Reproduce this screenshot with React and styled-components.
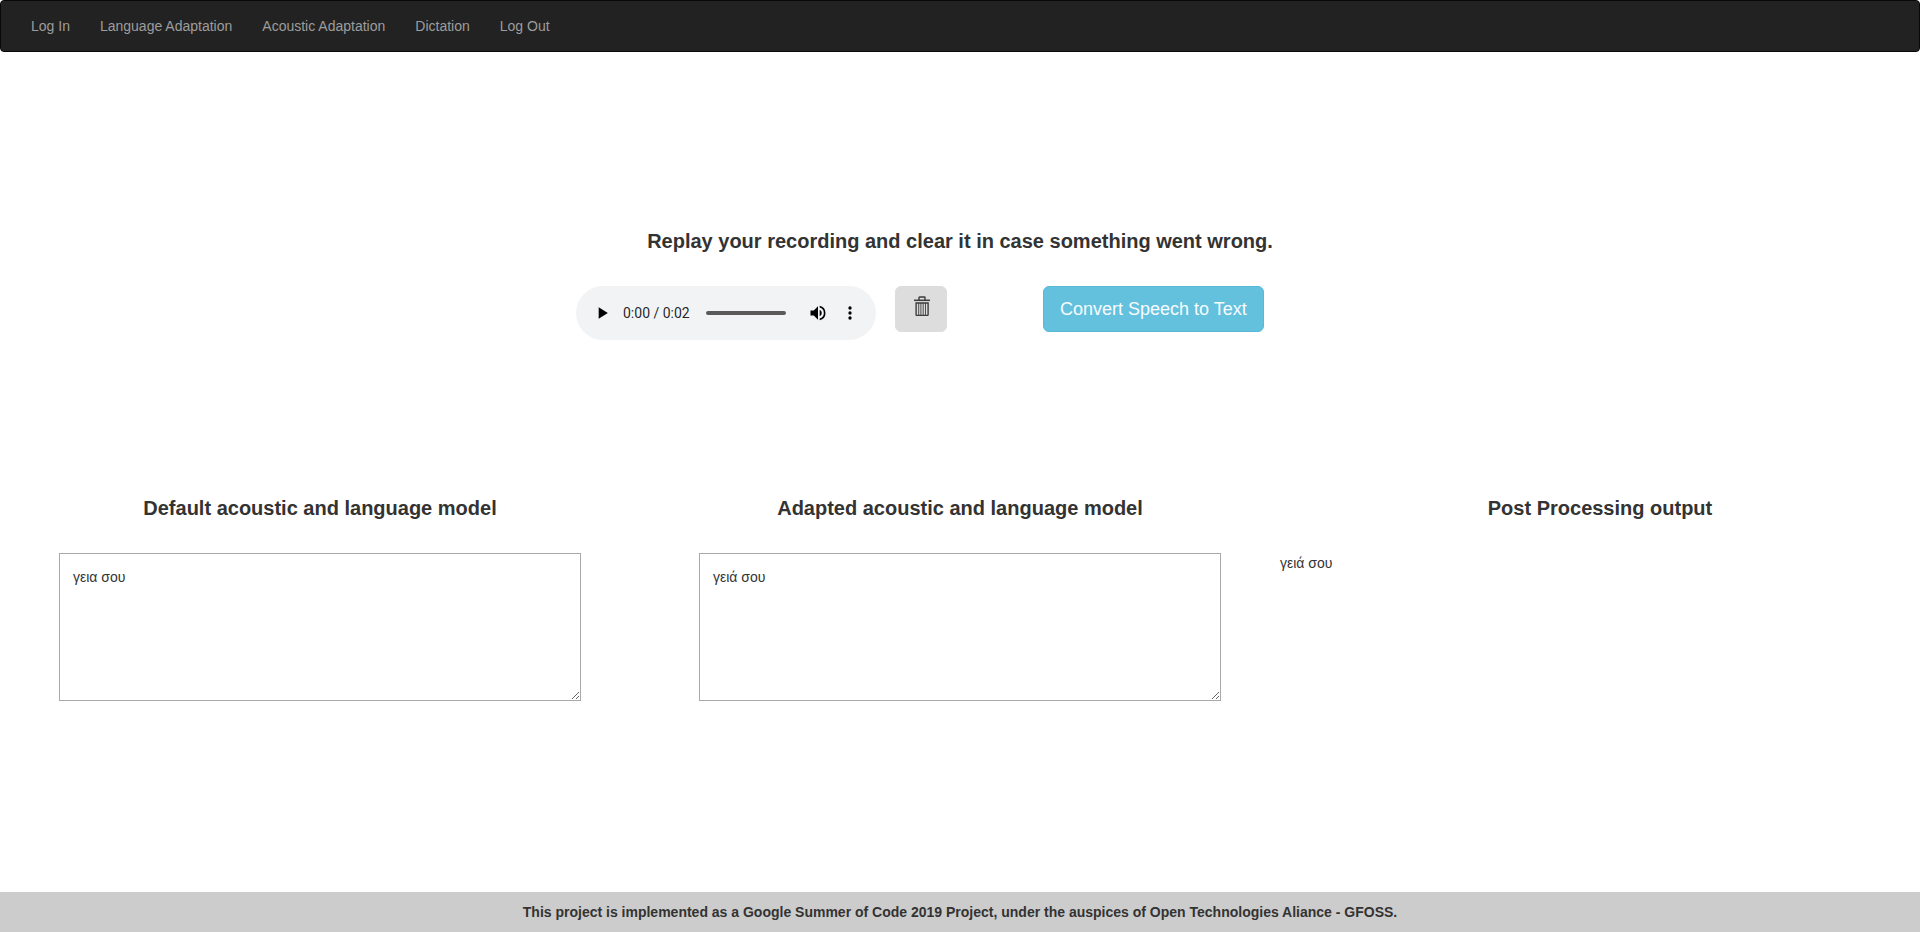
import React from "react";
import styled, { createGlobalStyle } from "styled-components";

const GlobalStyle = createGlobalStyle`
  *, *::before, *::after { box-sizing: border-box; }
  body {
    margin: 0;
    background: #fff;
    color: #333;
    font: 14px/20px "Liberation Sans", Arial, sans-serif;
  }
`;

const Page = styled.div`
  display: flex;
  flex-direction: column;
  min-height: 100vh;
`;

const Navbar = styled.nav`
  min-height: 52px;
  padding: 0 15px;
  background: #222;
  border: 1px solid #080808;
  border-radius: 4px;
`;

const NavList = styled.ul`
  display: flex;
  flex-wrap: wrap;
  margin: 0;
  padding: 0;
  list-style: none;
`;

const NavLink = styled.a`
  display: block;
  padding: 15px;
  color: #9d9d9d;
  text-decoration: none;
  &:hover { color: #fff; }
`;

const Main = styled.main`
  flex: 1;
  display: flex;
  flex-direction: column;
  gap: 157px;
  padding: 178px 0 40px;
`;

const Heading = styled.h2`
  margin: 0 0 34px;
  font-size: 20px;
  line-height: 22px;
  font-weight: bold;
  text-align: center;
`;

const RecordingRow = styled.div`
  display: flex;
  align-items: flex-start;
  padding-left: 30%;
`;

const Player = styled.div`
  display: flex;
  align-items: center;
  width: 300px;
  height: 54px;
  padding: 0 10px;
  background: #f1f3f4;
  border-radius: 27px;
`;

const PlayerButton = styled.button`
  display: flex;
  align-items: center;
  justify-content: center;
  width: 32px;
  height: 32px;
  flex: none;
  padding: 0;
  border: 0;
  background: transparent;
  color: #000;
`;

const Time = styled.span`
  padding-left: 5px;
  color: rgba(0, 0, 0, 0.87);
  font-family: Roboto, sans-serif;
  white-space: nowrap;
`;

const Timeline = styled.input`
  appearance: none;
  flex: 1;
  min-width: 0;
  height: 4px;
  margin: 0 16px;
  background: #5a5a5a;
  border-radius: 2px;
  &::-webkit-slider-thumb {
    appearance: none;
    width: 0;
    height: 0;
  }
`;

const Button = styled.button`
  height: 46px;
  padding: 0 16px;
  border: 1px solid ${(p) => (p.$primary ? "#58b8d8" : "#ddd")};
  border-radius: 6px;
  background: ${(p) => (p.$primary ? "#63c1de" : "#ddd")};
  color: ${(p) => (p.$primary ? "#f7fcfe" : "#333")};
  font: 18px/24px "Liberation Sans", Arial, sans-serif;
  white-space: nowrap;
`;

const ClearButton = styled(Button)`
  display: flex;
  align-items: flex-start;
  justify-content: center;
  width: 52px;
  margin: 0 96px 0 19px;
  padding: 9px 0 0 2px;
`;

const Models = styled.div`
  display: grid;
  grid-template-columns: repeat(3, 1fr);
`;

const ModelText = styled.textarea`
  display: block;
  width: calc(100% - 118px);
  height: 148px;
  margin: 0 auto;
  padding: 13px;
  border: 1px solid #a9a9a9;
  background: #fff;
  color: inherit;
  font: inherit;
`;

const Output = styled.p`
  margin: 0;
`;

const Footer = styled.footer`
  padding: 10px;
  background: #ccc;
  font-weight: bold;
  text-align: center;
`;

const Icon = ({ children }) => (
  <svg width="20" height="20" viewBox="0 0 24 24" fill="currentColor" aria-hidden="true">
    {children}
  </svg>
);

const TrashIcon = () => (
  <svg width="16" height="20" viewBox="0 0 16 20" fill="none" stroke="#3c3c3c" aria-hidden="true">
    <path d="M5 4V1.6Q5 1 5.6 1h4.8q.6 0 .6.6V4" strokeWidth="1.4" />
    <path d="M0 4.3h16" strokeWidth="1.5" />
    <path d="M2.1 7h12v11.6q0 .9-.9.9H3q-.9 0-.9-.9z" strokeWidth="1.4" />
    <path d="M4.7 7v12.5M6.9 7v12.5M9.2 7v12.5M11.5 7v12.5" strokeWidth=".9" />
  </svg>
);

const links = ["Log In", "Language Adaptation", "Acoustic Adaptation", "Dictation", "Log Out"];

const models = [
  { id: "default-model", title: "Default acoustic and language model", text: "γεια σου" },
  { id: "adapted-model", title: "Adapted acoustic and language model", text: "γειά σου" },
];

export default function App() {
  return (
    <Page>
      <GlobalStyle />
      <Navbar>
        <NavList>
          {links.map((label) => (
            <li key={label}>
              <NavLink href="#">{label}</NavLink>
            </li>
          ))}
        </NavList>
      </Navbar>
      <Main>
        <section>
          <Heading>Replay your recording and clear it in case something went wrong.</Heading>
          <RecordingRow>
            <Player>
              <PlayerButton type="button" aria-label="Play">
                <Icon><path d="M8 5v14l11-7z" /></Icon>
              </PlayerButton>
              <Time>0:00 / 0:02</Time>
              <Timeline type="range" min="0" max="2" defaultValue="0" aria-label="Playback position" />
              <PlayerButton type="button" aria-label="Mute">
                <Icon>
                  <path d="M3 9v6h4l5 5V4L7 9H3zm13.5 3A4.5 4.5 0 0 0 14 7.97v8.05A4.5 4.5 0 0 0 16.5 12zM14 3.23v2.06a7 7 0 0 1 0 13.42v2.06a9 9 0 0 0 0-17.54z" />
                </Icon>
              </PlayerButton>
              <PlayerButton type="button" aria-label="More options">
                <Icon>
                  <circle cx="12" cy="6" r="2" />
                  <circle cx="12" cy="12" r="2" />
                  <circle cx="12" cy="18" r="2" />
                </Icon>
              </PlayerButton>
            </Player>
            <ClearButton type="button" aria-label="Clear recording">
              <TrashIcon />
            </ClearButton>
            <Button type="button" $primary>Convert Speech to Text</Button>
          </RecordingRow>
        </section>
        <Models>
          {models.map((model) => (
            <section key={model.id}>
              <Heading>
                <label htmlFor={model.id}>{model.title}</label>
              </Heading>
              <ModelText id={model.id} defaultValue={model.text} />
            </section>
          ))}
          <section>
            <Heading>Post Processing output</Heading>
            <Output>γειά σου</Output>
          </section>
        </Models>
      </Main>
      <Footer>
        This project is implemented as a Google Summer of Code 2019 Project, under the auspices of
        Open Technologies Aliance - GFOSS.
      </Footer>
    </Page>
  );
}
